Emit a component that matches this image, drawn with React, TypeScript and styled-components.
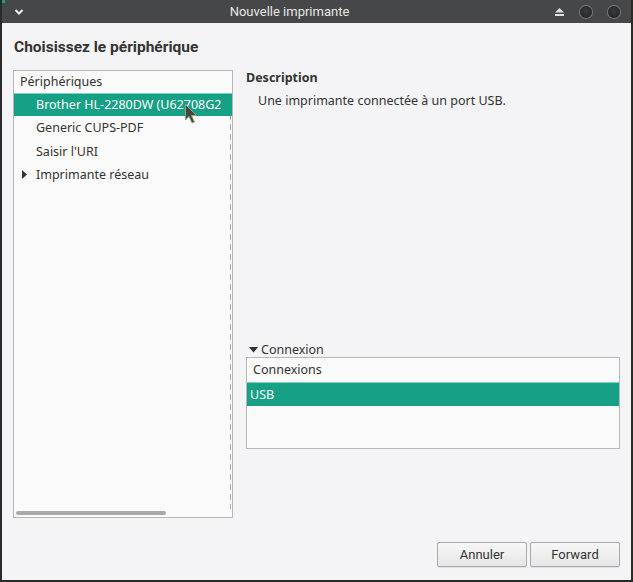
import React from "react";
import styled, { createGlobalStyle } from "styled-components";

const Global = createGlobalStyle`
  html, body { margin: 0; padding: 0; background: #2b2b2b; }
  body { font-family: "Noto Sans", "Open Sans", sans-serif; }
  * { box-sizing: border-box; }
`;

const Window = styled.div`
  position: relative;
  width: 633px;
  height: 582px;
  background: #f4f4f6;
  border: 2px solid #2a2a2a;
  border-top: none;
  display: flex;
  flex-direction: column;
  overflow: hidden;
`;

const TitleBar = styled.div`
  height: 23px;
  flex: none;
  background: #464748;
  display: flex;
  align-items: center;
  padding: 0 11px 0 12px;
  color: #e4e4e4;
`;

const TitleText = styled.div`
  flex: 1;
  text-align: center;
  font-family: Roboto, "Noto Sans", sans-serif;
  font-size: 13px;
  color: #e6e6e6;
`;

const TitleButtons = styled.div`
  display: flex;
  align-items: center;
  gap: 16px;
`;

const Dot = styled.span`
  width: 12px;
  height: 12px;
  border-radius: 50%;
  background: radial-gradient(circle at 50% 45%, #3a3a3a 0, #2c2c2c 60%, #222 100%);
  box-shadow: 0 0 0 1px #7c7c7c;
`;

const Content = styled.div`
  flex: 1;
  display: flex;
  flex-direction: column;
  padding: 14px 11px 0 11px;
`;

const Heading = styled.h1`
  margin: 0;
  padding-left: 1px;
  font-family: Roboto, "Noto Sans", sans-serif;
  font-weight: 700;
  font-size: 15.5px;
  line-height: 20px;
  color: #333;
`;

const Main = styled.div`
  display: flex;
  gap: 13px;
  height: 448px;
  margin-top: 13px;
`;

const ListBox = styled.div`
  position: relative;
  width: 220px;
  flex: none;
  border: 1px solid #b8b8b8;
  background: #fafafa;
  overflow: hidden;
`;

const ListHeader = styled.div`
  height: 22px;
  line-height: 22px;
  padding-left: 6px;
  font-size: 12.5px;
  color: #333;
`;

const Row = styled.div<{ $selected?: boolean }>`
  position: relative;
  height: 23.3px;
  line-height: 23px;
  padding-left: 22px;
  font-size: 12.5px;
  white-space: nowrap;
  overflow: hidden;
  color: ${(p) => (p.$selected ? "#fff" : "#333")};
  background: ${(p) => (p.$selected ? "#16a085" : "transparent")};
  box-shadow: ${(p) => (p.$selected ? "inset 0 1px 0 #7fd3bf" : "none")};
  z-index: 1;
`;

const Expander = styled.svg`
  position: absolute;
  left: 8px;
  top: 7px;
`;

const DashLine = styled.div`
  position: absolute;
  right: 1px;
  top: 23px;
  bottom: 8px;
  width: 1px;
  background: repeating-linear-gradient(to bottom, #a9a9a9 0 6px, transparent 6px 10px);
`;

const HScroll = styled.div`
  position: absolute;
  left: 2px;
  bottom: 2px;
  width: 150px;
  height: 4px;
  border-radius: 2px;
  background: #a9a9a9;
`;

const RightPane = styled.div`
  flex: 1;
  display: flex;
  flex-direction: column;
`;

const SectionTitle = styled.div`
  font-weight: 700;
  font-size: 12.5px;
  line-height: 16px;
  color: #333;
`;

const DescText = styled.div`
  font-size: 12.5px;
  line-height: 18px;
  color: #333;
  padding-left: 12px;
  margin-top: 6px;
`;

const ConnSection = styled.div`
  margin-top: auto;
  margin-bottom: 69px;
`;

const ConnLabel = styled.div`
  font-size: 12.5px;
  line-height: 16px;
  color: #333;
  padding-left: 3px;
  display: flex;
  align-items: center;
  gap: 3px;
  margin-bottom: -1px;
`;

const ConnBox = styled.div`
  height: 92px;
  border: 1px solid #b8b8b8;
  background: #fafafa;
`;

const ConnHeader = styled.div`
  height: 24px;
  line-height: 24px;
  padding-left: 6px;
  font-size: 12.5px;
  color: #333;
`;

const ConnRow = styled.div`
  height: 24px;
  line-height: 23px;
  padding-left: 3px;
  font-size: 12.5px;
  color: #fff;
  background: #16a085;
  border-top: 1px solid #7fd3bf;
`;

const ButtonRow = styled.div`
  display: flex;
  justify-content: flex-end;
  gap: 3px;
  margin-top: 24px;
`;

const Button = styled.button`
  width: 90px;
  height: 25px;
  padding: 0;
  border: 1px solid #a9a9a9;
  border-radius: 2px;
  background: linear-gradient(#f8f8f8, #e5e5e5);
  box-shadow: 0 1px 0 rgba(0, 0, 0, 0.08);
  font-family: Roboto, "Noto Sans", sans-serif;
  font-size: 13px;
  color: #333;
`;

const Cursor = styled.svg`
  position: absolute;
  left: 182px;
  top: 103px;
  z-index: 5;
`;

const Corner = styled.div`
  position: absolute;
  left: 0;
  top: 0;
  width: 3px;
  height: 3px;
  background: #16a085;
`;

export default function App() {
  return (
    <>
      <Global />
      <Window>
        <Corner />
        <TitleBar>
          <svg width="10" height="8" viewBox="0 0 10 8">
            <path d="M1.5 2 L5 5.5 L8.5 2" stroke="#eee" strokeWidth="2" fill="none" />
          </svg>
          <TitleText>Nouvelle imprimante</TitleText>
          <TitleButtons>
            <svg width="9" height="8" viewBox="0 0 9 8">
              <path d="M4.5 0 L9 4.5 L0 4.5 Z" fill="#e0e0e0" />
              <rect x="0" y="6" width="9" height="2" fill="#e0e0e0" />
            </svg>
            <Dot />
            <Dot />
          </TitleButtons>
        </TitleBar>
        <Content>
          <Heading>Choisissez le périphérique</Heading>
          <Main>
            <ListBox>
              <ListHeader>Périphériques</ListHeader>
              <Row $selected>Brother HL-2280DW (U62708G2</Row>
              <Row>Generic CUPS-PDF</Row>
              <Row>Saisir l'URI</Row>
              <Row>
                <Expander width="5" height="9" viewBox="0 0 5 9">
                  <path d="M0 0 L5 4.5 L0 9 Z" fill="#333" />
                </Expander>
                Imprimante réseau
              </Row>
              <DashLine />
              <HScroll />
            </ListBox>
            <RightPane>
              <SectionTitle>Description</SectionTitle>
              <DescText>Une imprimante connectée à un port USB.</DescText>
              <ConnSection>
                <ConnLabel>
                  <svg width="9" height="6" viewBox="0 0 9 6">
                    <path d="M0 0 L9 0 L4.5 5.5 Z" fill="#333" />
                  </svg>
                  Connexion
                </ConnLabel>
                <ConnBox>
                  <ConnHeader>Connexions</ConnHeader>
                  <ConnRow>USB</ConnRow>
                </ConnBox>
              </ConnSection>
            </RightPane>
          </Main>
          <ButtonRow>
            <Button>Annuler</Button>
            <Button>Forward</Button>
          </ButtonRow>
        </Content>
        <Cursor width="14" height="22" viewBox="0 0 14 22">
          <path
            d="M1.5 1.5 L1.5 17 L5 13.5 L8 20 L10.5 19 L7.5 12.5 L12.5 12.5 Z"
            fill="#45473f"
            stroke="#8fa878"
            strokeWidth="1"
            strokeLinejoin="round"
          />
        </Cursor>
      </Window>
    </>
  );
}
